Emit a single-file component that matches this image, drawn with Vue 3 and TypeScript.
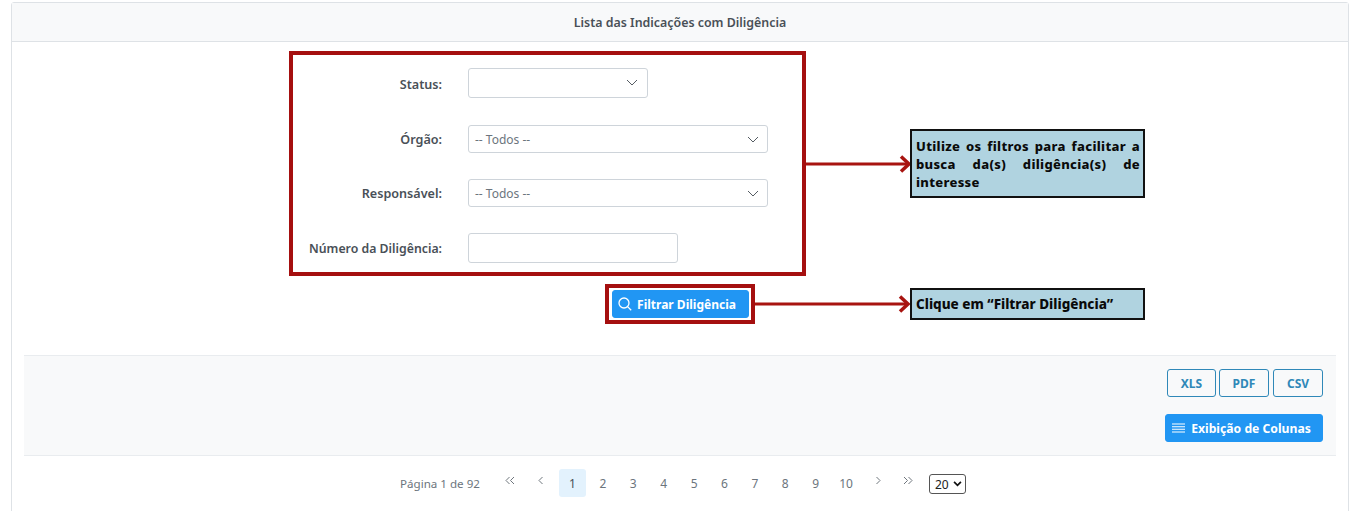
<script setup lang="ts">
const pages: number[] = [1, 2, 3, 4, 5, 6, 7, 8, 9, 10]
</script>

<template>
  <div class="page">
    <section class="card">
      <header class="card-head">Lista das Indicações com Diligência</header>
      <div class="card-body">
        <form class="filters" @submit.prevent>
          <div class="row row-status">
            <label>Status:</label>
            <div class="field select w180 h30 first-select">
              <svg class="chev" viewBox="0 0 12 7"><path d="M1 1l5 5 5-5" /></svg>
            </div>
          </div>
          <div class="row row-orgao">
            <label>Órgão:</label>
            <div class="field select w300 h28">
              <span>-- Todos --</span>
              <svg class="chev" viewBox="0 0 12 7"><path d="M1 1l5 5 5-5" /></svg>
            </div>
          </div>
          <div class="row row-resp">
            <label>Responsável:</label>
            <div class="field select w300 h28">
              <span>-- Todos --</span>
              <svg class="chev" viewBox="0 0 12 7"><path d="M1 1l5 5 5-5" /></svg>
            </div>
          </div>
          <div class="row row-num">
            <label class="tight">Número da Diligência:</label>
            <div class="field w210 h30"></div>
          </div>
          <div class="submit">
            <button class="btn primary filter" type="button">
              <svg viewBox="0 0 14 14" class="search"><circle cx="6" cy="6" r="5" /><path d="M9.600 9.600l3.600 3.600" /></svg>
              Filtrar Diligência
            </button>
          </div>
        </form>

        <div class="toolbar">
          <div class="exports">
            <button class="btn outline xls" type="button">XLS</button>
            <button class="btn outline pdf" type="button">PDF</button>
            <button class="btn outline csv" type="button">CSV</button>
          </div>
          <button class="btn primary columns" type="button">
            <svg viewBox="0 0 13 10" class="bars"><path d="M0 1h13M0 3.700h13M0 6.300h13M0 9h13" /></svg>
            Exibição de Colunas
          </button>
        </div>

        <nav class="pager">
          <span class="report">Página 1 de 92</span>
          <svg class="nav first" viewBox="0 0 10 9"><path d="M4.500 1L1 4.500 4.500 8M9 1L5.500 4.500 9 8" /></svg>
          <svg class="nav prev" viewBox="0 0 5 9"><path d="M4.500 1L1 4.500 4.500 8" /></svg>
          <span v-for="p in pages" :key="p" class="num" :class="{ active: p === 1 }">{{ p }}</span>
          <svg class="nav next" viewBox="0 0 5 9"><path d="M.5 1L4 4.500.5 8" /></svg>
          <svg class="nav last" viewBox="0 0 10 9"><path d="M1 1l3.500 3.500L1 8M5.500 1L9 4.500 5.500 8" /></svg>
          <div class="size">20<svg viewBox="0 0 10 7"><path d="M1 1l4 4 4-4" /></svg></div>
        </nav>
      </div>
    </section>

    <div class="mark mark-form"></div>
    <div class="mark mark-btn"></div>

    <svg class="arrow arrow-a" viewBox="0 0 106 20"><path class="shaft" d="M0 10H101" /><path class="head" d="M95 2.500L103 10L95 17.500" /></svg>
    <svg class="arrow arrow-b" viewBox="0 0 156 20"><path class="shaft" d="M0 10H151" /><path class="head" d="M145 2.500L153 10L145 17.500" /></svg>

    <div class="note note-a">Utilize os filtros para facilitar a busca da(s) diligência(s) de interesse</div>
    <div class="note note-b">Clique em “Filtrar Diligência”</div>
  </div>
</template>

<style>
html, body { margin: 0; background: #fff; overflow: hidden; }
</style>

<style scoped>
.page {
  position: relative;
  width: 1368px;
  height: 511px;
  overflow: hidden;
  font-family: "Noto Sans", "DejaVu Sans", sans-serif;
  font-size: 12px;
  color: #495057;
  background: #fff;
}
.card {
  margin: 2px 19px 0 11px;
  height: 560px;
  box-sizing: border-box;
  border: 1px solid #dee2e6;
  border-radius: 3px;
}
.card-head {
  height: 38px;
  display: flex;
  align-items: center;
  justify-content: center;
  background: #f8f9fa;
  border-bottom: 1px solid #dee2e6;
  font-weight: 600;
  font-size: 12.400px;
}
.card-body { padding: 0 12px; }
.filters { height: 313px; padding-top: 26px; box-sizing: border-box; }
.row { display: flex; align-items: center; }
.row label {
  width: 418px;
  margin-right: 26px;
  text-align: right;
  font-weight: 600;
  font-size: 12.600px;
}
.row label.tight { font-size: 12.300px; }
.row-status { height: 30px; }
.row-status label { padding-top: 2px; }
.row-orgao { height: 28px; margin-top: 27px; }
.row-resp { height: 28px; margin-top: 26px; }
.row-num { height: 30px; margin-top: 26px; }
.field {
  box-sizing: border-box;
  display: flex;
  align-items: center;
  justify-content: space-between;
  padding: 0 8px 0 6px;
  background: #fff;
  border: 1px solid #ced4da;
  border-radius: 3px;
  color: #6c757d;
  font-size: 12px;
}
.first-select { padding-right: 9px; padding-bottom: 2px; }
.w180 { width: 180px; }
.w210 { width: 210px; }
.w300 { width: 300px; }
.h28 { height: 28px; }
.h30 { height: 30px; }
.chev {
  width: 12px;
  height: 7px;
  margin-left: auto;
  fill: none;
  stroke: #555c63;
  stroke-width: 1;
}
.submit { display: flex; margin-top: 27px; padding-left: 588px; }
.btn {
  box-sizing: border-box;
  display: inline-flex;
  align-items: center;
  justify-content: center;
  height: 28px;
  padding: 0;
  border-radius: 3px;
  font-family: inherit;
  font-size: 12px;
  font-weight: 700;
}
.primary { background: #2196f3; border: 1px solid #2196f3; color: #fff; }
.outline { background: transparent; border: 1px solid #2f88b8; color: #2f88b8; }
.filter { width: 137px; gap: 5px; padding-right: 7px; }
.search { width: 14px; height: 14px; fill: none; stroke: #fff; stroke-width: 1.300; }
.toolbar {
  height: 101px;
  box-sizing: border-box;
  padding: 13px 13px 0 0;
  background: #f8f9fa;
  border-top: 1px solid #e9ecef;
  border-bottom: 1px solid #e9ecef;
  display: flex;
  flex-direction: column;
  align-items: flex-end;
}
.exports { display: flex; gap: 3px; }
.xls { width: 49px; }
.pdf { width: 50px; margin-right: 1px; }
.csv { width: 50px; }
.columns { width: 158px; margin-top: 17px; gap: 6px; font-size: 12.200px; padding-right: 5px; }
.bars { width: 13px; height: 10px; fill: none; stroke: #fff; stroke-width: 1.100; }
.pager {
  display: flex;
  align-items: center;
  height: 28px;
  margin-top: 13px;
  padding-left: 376px;
  font-size: 12px;
  color: #6c757d;
}
.report { width: 105px; font-size: 11.600px; white-space: nowrap; }
.nav { fill: none; stroke: #6f767d; stroke-width: 1; height: 9px; flex: none; }
.first { width: 10px; margin: -5px 23px 0 0; }
.prev { width: 5px; margin: -5px 16px 0 0; }
.num { flex: none; width: 27px; height: 28px; margin-right: 3.400px; display: flex; align-items: center; justify-content: center; border-radius: 3px; }
.num.active { background: #e3f2fd; color: #495057; }
.next { width: 5px; margin: -5px 0 0 13px; }
.last { width: 10px; margin: -5px 0 0 22px; }
.size {
  box-sizing: border-box;
  flex: none;
  width: 37px;
  height: 20px;
  margin: 2px 0 0 16px;
  padding: 0 3px 0 5px;
  display: flex;
  align-items: center;
  justify-content: space-between;
  border: 1px solid #555;
  border-radius: 3px;
  color: #222;
}
.size svg { width: 9px; height: 6px; fill: none; stroke: #111; stroke-width: 2; }
.mark { position: absolute; box-sizing: border-box; border: 4px solid #a50f0f; }
.mark-form { left: 289px; top: 51px; width: 517px; height: 225px; }
.mark-btn { left: 605px; top: 284px; width: 150px; height: 40px; }
.arrow { position: absolute; height: 20px; fill: none; stroke: #a81410; }
.arrow-a { left: 806px; top: 154px; width: 106px; }
.arrow-b { left: 755px; top: 294px; width: 156px; }
.shaft { stroke-width: 3; }
.head { stroke-width: 3.500; }
.note {
  position: absolute;
  left: 910px;
  width: 235px;
  box-sizing: border-box;
  background: #b0d3e0;
  border: 2px solid #111;
  color: #0a0a0a;
  font-family: "Noto Sans", "Open Sans", sans-serif;
  font-weight: 800;
  font-size: 13px;
  line-height: 18px;
  padding: 0 3px 0 4px;
}
.note-a { top: 129px; height: 69px; padding-top: 6px; text-align: justify; letter-spacing: 0.3px; }
.note-b { top: 288px; height: 32px; display: flex; align-items: center; font-size: 13.500px; }
</style>
